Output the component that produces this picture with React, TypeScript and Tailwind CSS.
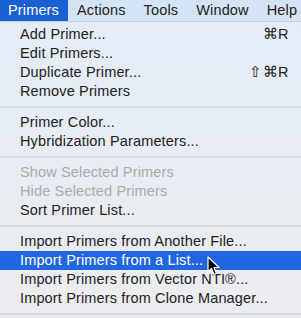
import React from 'react'

type Item =
  | { type: 'item'; label: string; shortcut?: string; disabled?: boolean; active?: boolean }
  | { type: 'sep' }

const items: Item[] = [
  { type: 'item', label: 'Add Primer...', shortcut: '⌘R' },
  { type: 'item', label: 'Edit Primers...' },
  { type: 'item', label: 'Duplicate Primer...', shortcut: '⇧⌘R' },
  { type: 'item', label: 'Remove Primers' },
  { type: 'sep' },
  { type: 'item', label: 'Primer Color...' },
  { type: 'item', label: 'Hybridization Parameters...' },
  { type: 'sep' },
  { type: 'item', label: 'Show Selected Primers', disabled: true },
  { type: 'item', label: 'Hide Selected Primers', disabled: true },
  { type: 'item', label: 'Sort Primer List...' },
  { type: 'sep' },
  { type: 'item', label: 'Import Primers from Another File...' },
  { type: 'item', label: 'Import Primers from a List...', active: true },
  { type: 'item', label: 'Import Primers from Vector NTI®...' },
  { type: 'item', label: 'Import Primers from Clone Manager...' },
  { type: 'sep' },
]

const menus = ['Primers', 'Actions', 'Tools', 'Window', 'Help']

function Cursor() {
  return (
    <svg className="absolute left-[207px] top-[256px]" width="14" height="20" viewBox="0 0 14 20">
      <path
        d="M1 1 L1 16 L4.5 12.5 L7 18.5 L9.5 17.5 L7 11.5 L12 11.5 Z"
        fill="#000"
        stroke="#fff"
        strokeWidth="1.2"
        strokeLinejoin="round"
      />
    </svg>
  )
}

export default function App() {
  return (
    <div
      className="relative w-[301px] h-[318px] overflow-hidden bg-gradient-to-b from-[#e3ecf7] to-[#ebecee] text-[14.5px] tracking-[0.15px] text-[#222]"
      style={{ fontFamily: '"Helvetica Neue", "Liberation Sans", Arial, sans-serif' }}
    >
      {/* メニューバー */}
      <div className="flex h-[22px] items-center bg-[#d5e4f4] border-b border-[#c3d0de]">
        {menus.map((m, i) => (
          <div
            key={m}
            className={
              i === 0
                ? 'h-full flex items-center pl-[8px] pr-[9px] bg-[#1b60d3] text-white'
                : 'h-full flex items-center px-[9px] text-[#222]'
            }
          >
            {m}
          </div>
        ))}
      </div>

      {/* メニュー */}
      <div className="pt-[3px]">
        {items.map((it, i) =>
          it.type === 'sep' ? (
            <div key={i} className="h-[12px] flex items-center">
              <div className="w-full h-[2px] bg-[#d6dbe1]" />
            </div>
          ) : (
            <div
              key={i}
              className={
                'h-[19px] flex items-center justify-between pl-[20px] pr-[12px] ' +
                (it.active ? 'bg-[#1f66e0] text-white' : it.disabled ? 'text-[#a9abae]' : '')
              }
            >
              <span>{it.label}</span>
              {it.shortcut && <span className="tracking-[0.5px]">{it.shortcut}</span>}
            </div>
          )
        )}
      </div>

      <Cursor />
    </div>
  )
}
